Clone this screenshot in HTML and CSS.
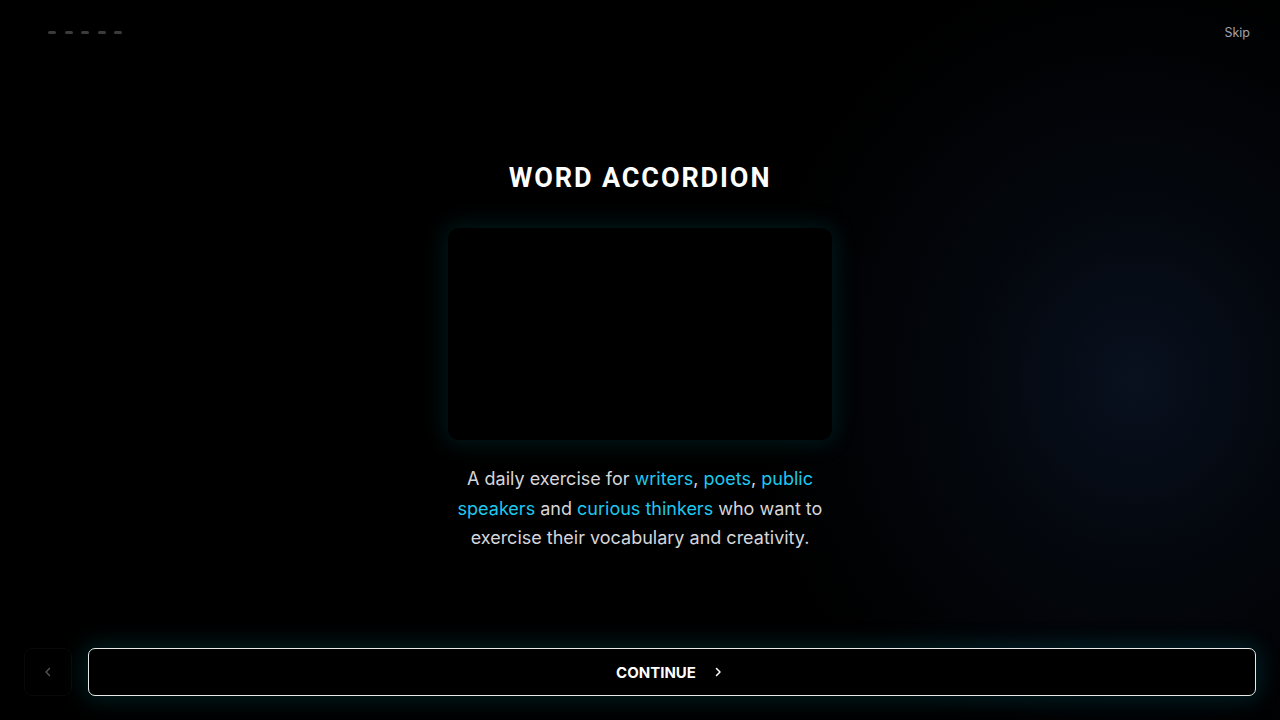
FILE: index.html
```html
<!DOCTYPE html>
<html lang="en">
<head>
<meta charset="utf-8">
<title>Word Accordion</title>
<link rel="stylesheet" href="styles.css">
</head>
<body>
<div class="page">
  <header class="top">
    <div class="progress">
      <span class="step"></span><span class="step"></span><span class="step"></span><span class="step"></span><span class="step"></span>
    </div>
    <a class="skip" href="#">Skip</a>
  </header>
  <main class="main">
    <h1 class="title">WORD ACCORDION</h1>
    <div class="card"></div>
    <p class="intro">A daily exercise for <span class="hl">writers</span>, <span class="hl">poets</span>, <span class="hl">public speakers</span> and <span class="hl">curious thinkers</span> who want to exercise their vocabulary and creativity.</p>
  </main>
  <footer class="bottom">
    <button class="back" type="button" aria-label="Back">
      <svg width="12" height="12" viewBox="0 0 12 12" fill="none" stroke="currentColor" stroke-width="1.4" stroke-linecap="round" stroke-linejoin="round"><path d="M7.5 2.5 L4 6 L7.5 9.5"/></svg>
    </button>
    <button class="continue" type="button">
      <span>CONTINUE</span>
      <svg width="12" height="12" viewBox="0 0 12 12" fill="none" stroke="currentColor" stroke-width="1.5" stroke-linecap="round" stroke-linejoin="round"><path d="M4.5 2.5 L8 6 L4.5 9.5"/></svg>
    </button>
  </footer>
</div>
</body>
</html>
```

FILE: styles.css
```css
* { box-sizing: border-box; }
html, body {
  margin: 0;
  padding: 0;
  height: 100%;
}
body {
  background-color: #000;
  background-image: radial-gradient(ellipse 380px 420px at 1135px 380px, rgba(12, 24, 44, 0.7) 0%, rgba(8, 16, 30, 0.42) 45%, rgba(0, 0, 0, 0) 100%);
  color: #fff;
  font-family: "Inter", "Liberation Sans", sans-serif;
  overflow: hidden;
}
.page {
  height: 720px;
  display: flex;
  flex-direction: column;
}
.top {
  height: 64px;
  display: flex;
  align-items: center;
  justify-content: space-between;
  padding: 0 30px 0 48px;
}
.progress {
  display: flex;
  gap: 8.5px;
}
.step {
  width: 8px;
  height: 3px;
  border-radius: 2px;
  background: #3a3a3f;
}
.skip {
  color: #a3a3aa;
  font-size: 12.5px;
  text-decoration: none;
}
.main {
  display: flex;
  flex-direction: column;
  align-items: center;
  padding-top: 96px;
}
.title {
  margin: 0;
  font-family: "Roboto", "Liberation Sans", sans-serif;
  font-weight: 700;
  font-size: 27px;
  line-height: 36px;
  letter-spacing: 1.9px;
  color: #fff;
}
.card {
  margin-top: 32px;
  width: 384px;
  height: 212px;
  border-radius: 11px;
  background: #000;
  box-shadow: 0 0 22px 4px rgba(0, 150, 160, 0.16);
}
.intro {
  margin: 24px 0 0;
  width: 384px;
  text-align: center;
  font-size: 18px;
  line-height: 29.5px;
  color: #d6d6da;
}
.hl { color: #1ec8ee; }
.bottom {
  margin-top: auto;
  display: flex;
  gap: 16px;
  padding: 0 24px 24px;
}
.back {
  width: 48px;
  height: 48px;
  flex: none;
  display: flex;
  align-items: center;
  justify-content: center;
  background: transparent;
  border: 1px solid #0a0a0b;
  border-radius: 8px;
  color: #56565c;
  padding: 0;
}
.continue {
  flex: 1;
  height: 48px;
  display: flex;
  align-items: center;
  justify-content: center;
  gap: 16px;
  background: #000;
  border: 1.5px solid #e6e8ea;
  border-radius: 7px;
  color: #fff;
  font-family: "Inter", "Liberation Sans", sans-serif;
  font-weight: 700;
  font-size: 15px;
  letter-spacing: 0;
  padding: 0 4px 0 0;
  box-shadow: 0 0 22px 4px rgba(0, 150, 160, 0.2);
}
```
